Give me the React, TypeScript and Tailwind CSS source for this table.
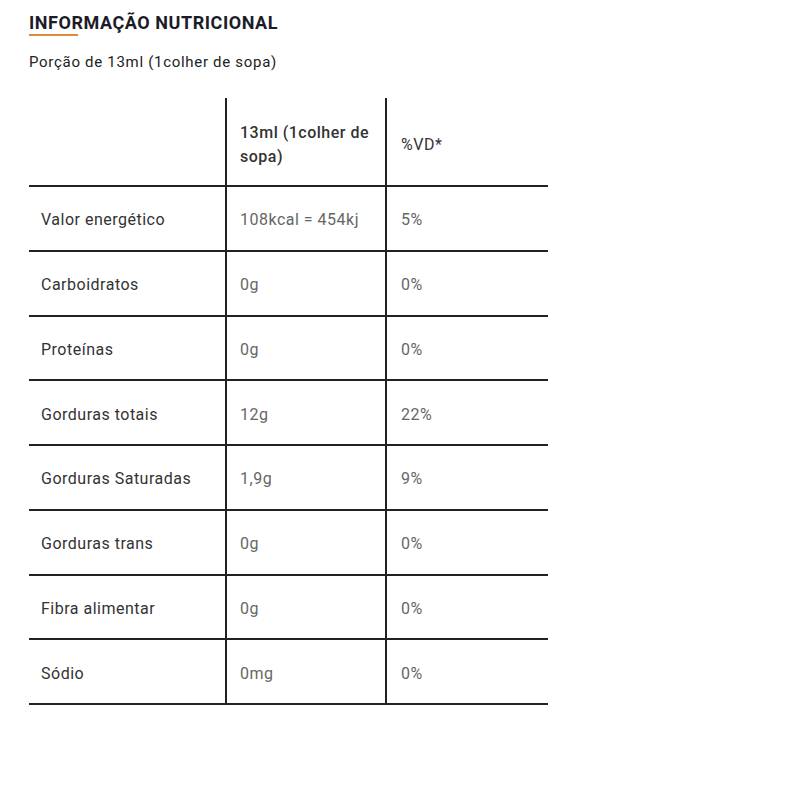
import React from 'react';

type Row = { name: string; amount: string; vd: string };

const rows: Row[] = [
  { name: 'Valor energético', amount: '108kcal = 454kj', vd: '5%' },
  { name: 'Carboidratos', amount: '0g', vd: '0%' },
  { name: 'Proteínas', amount: '0g', vd: '0%' },
  { name: 'Gorduras totais', amount: '12g', vd: '22%' },
  { name: 'Gorduras Saturadas', amount: '1,9g', vd: '9%' },
  { name: 'Gorduras trans', amount: '0g', vd: '0%' },
  { name: 'Fibra alimentar', amount: '0g', vd: '0%' },
  { name: 'Sódio', amount: '0mg', vd: '0%' },
];

export default function App() {
  return (
    <div className="w-[800px] h-[800px] bg-white font-['Roboto',sans-serif]">
      <div className="pl-[29px] pt-[11px]">
        <h2 className="relative inline-block text-[18px] leading-[24px] font-bold text-[#1c1c28] tracking-[0.55px]">
          INFORMAÇÃO NUTRICIONAL
          <span className="absolute left-0 top-[23px] w-[49px] h-[2px] bg-[#e0893a]" />
        </h2>
        <p className="mt-[16px] text-[15px] leading-[20px] text-[#222] tracking-[0.7px]">Porção de 13ml (1colher de sopa)</p>

        <table className="mt-[26px] w-[519px] border-collapse text-[16px] leading-[24px] tracking-[0.5px]">
          <thead>
            <tr className="h-[88px] border-b-2 border-[#222]">
              <th className="w-[197px] border-r-2 border-[#222]" />
              <th className="w-[160px] border-r-2 border-[#222] pl-[13px] pr-2 pt-[6px] text-left font-medium text-[#333]">
                13ml (1colher de sopa)
              </th>
              <th className="pl-[14px] pt-[6px] text-left font-normal text-[#333]">%VD*</th>
            </tr>
          </thead>
          <tbody>
            {rows.map((r) => (
              <tr key={r.name} className="h-[64.75px] border-b-2 border-[#222]">
                <td className="border-r-2 border-[#222] pl-[12px] pt-[4px] text-[#333]">{r.name}</td>
                <td className="border-r-2 border-[#222] pl-[13px] pt-[4px] text-[#666]">{r.amount}</td>
                <td className="pl-[14px] pt-[4px] text-[#666]">{r.vd}</td>
              </tr>
            ))}
          </tbody>
        </table>
      </div>
    </div>
  );
}
